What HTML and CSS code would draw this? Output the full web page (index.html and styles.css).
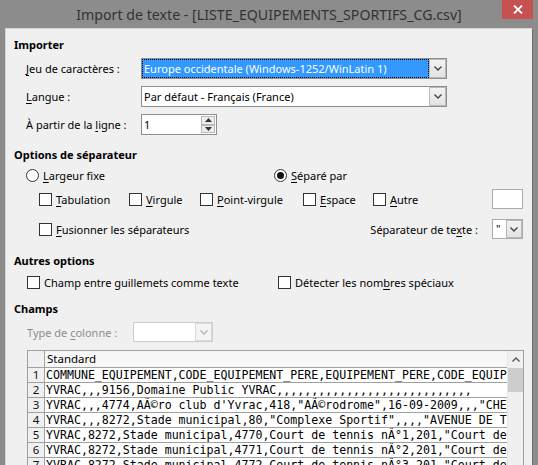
FILE: index.html
```html
<!DOCTYPE html>
<html lang="fr">
<head>
<meta charset="utf-8">
<title>Import de texte</title>
<link rel="stylesheet" href="styles.css">
</head>
<body>
<div class="window">
  <div class="titlebar">
    <span class="title">Import de texte - [LISTE_EQUIPEMENTS_SPORTIFS_CG.csv]</span>
    <div class="close"><svg width="10" height="9" viewBox="0 0 10 9"><path d="M1 0.5 L9 8.5 M9 0.5 L1 8.5" stroke="#fff" stroke-width="1.8" fill="none"/></svg></div>
  </div>
  <div class="panel">
    <div class="sec-title">Importer</div>
    <div class="frow r1">
      <span class="lbl"><u>J</u>eu de caractères :</span>
      <div class="combo wide">
        <div class="combo-text focused">Europe occidentale (Windows-1252/WinLatin 1)</div>
        <div class="combo-btn"><svg width="8" height="5" viewBox="0 0 8 5"><path d="M0.5 0.5 L4 4 L7.5 0.5" stroke="#444" stroke-width="1.4" fill="none"/></svg></div>
      </div>
    </div>
    <div class="frow r2">
      <span class="lbl"><u>L</u>angue :</span>
      <div class="combo wide">
        <div class="combo-text">Par défaut - Français (France)</div>
        <div class="combo-btn"><svg width="8" height="5" viewBox="0 0 8 5"><path d="M0.5 0.5 L4 4 L7.5 0.5" stroke="#444" stroke-width="1.4" fill="none"/></svg></div>
      </div>
    </div>
    <div class="frow r2">
      <span class="lbl">À partir de la <u>l</u>igne :</span>
      <div class="spin">
        <div class="spin-text">1</div>
        <div class="spin-btns">
          <div class="spin-b"><svg width="7" height="4" viewBox="0 0 7 4"><path d="M0 4 L3.5 0 L7 4 Z" fill="#333"/></svg></div>
          <div class="spin-b"><svg width="7" height="4" viewBox="0 0 7 4"><path d="M0 0 L3.5 4 L7 0 Z" fill="#333"/></svg></div>
        </div>
      </div>
    </div>

    <div class="sec-title s2">Options de séparateur</div>
    <div class="radrow">
      <div class="opt w248"><span class="radio"></span><span><u>L</u>argeur fixe</span></div>
      <div class="opt"><span class="radio on"></span><span><u>S</u>éparé par</span></div>
    </div>
    <div class="chkrow">
      <div class="opt w90"><span class="box"></span><span><u>T</u>abulation</span></div>
      <div class="opt w71"><span class="box"></span><span><u>V</u>irgule</span></div>
      <div class="opt w103"><span class="box"></span><span><u>P</u>oint-virgule</span></div>
      <div class="opt w70"><span class="box"></span><span><u>E</u>space</span></div>
      <div class="opt"><span class="box"></span><span><u>A</u>utre</span></div>
      <div class="field small"></div>
    </div>
    <div class="chkrow r-fus">
      <div class="opt"><span class="box"></span><span><u>F</u>usionner les séparateurs</span></div>
      <span class="txtsep">Séparateur de te<u>x</u>te :</span>
      <div class="combo tiny">
        <div class="combo-text">"</div>
        <div class="combo-btn sm"><svg width="8" height="5" viewBox="0 0 8 5"><path d="M0.5 0.5 L4 4 L7.5 0.5" stroke="#444" stroke-width="1.4" fill="none"/></svg></div>
      </div>
    </div>

    <div class="sec-title s3">Autres options</div>
    <div class="otherrow">
      <div class="opt w251"><span class="box"></span><span>Champ entre <u>g</u>uillemets comme texte</span></div>
      <div class="opt"><span class="box"></span><span>Détecter les nom<u>b</u>res spéciaux</span></div>
    </div>

    <div class="sec-title s4">Champs</div>
    <div class="typerow">
      <span class="lbl2">Type de <u>c</u>olonne :</span>
      <div class="combo dis">
        <div class="combo-text"></div>
        <div class="combo-btn"><svg width="8" height="5" viewBox="0 0 8 5"><path d="M0.5 0.5 L4 4 L7.5 0.5" stroke="#b5b5b5" stroke-width="1.4" fill="none"/></svg></div>
      </div>
    </div>

    <div class="table">
      <div class="grid">
        <div class="row head"><div class="num"></div><div class="cell hcell">Standard</div></div>
        <div class="row"><div class="num">1</div><div class="cell">COMMUNE_EQUIPEMENT,CODE_EQUIPEMENT_PERE,EQUIPEMENT_PERE,CODE_EQUIP</div></div>
        <div class="row"><div class="num">2</div><div class="cell">YVRAC,,,9156,Domaine Public YVRAC,,,,,,,,,,,,,,,,,,,,,,,,,,,,</div></div>
        <div class="row"><div class="num">3</div><div class="cell">YVRAC,,,4774,AÃ©ro club d'Yvrac,418,"AÃ©rodrome",16-09-2009,,,"CHE</div></div>
        <div class="row"><div class="num">4</div><div class="cell">YVRAC,,,8272,Stade municipal,80,"Complexe Sportif",,,,"AVENUE DE T</div></div>
        <div class="row"><div class="num">5</div><div class="cell">YVRAC,8272,Stade municipal,4770,Court de tennis nÂ°1,201,"Court de</div></div>
        <div class="row"><div class="num">6</div><div class="cell">YVRAC,8272,Stade municipal,4771,Court de tennis nÂ°2,201,"Court de</div></div>
        <div class="row"><div class="num">7</div><div class="cell">YVRAC,8272,Stade municipal,4772,Court de tennis nÂ°3,201,"Court de</div></div>
      </div>
      <div class="vscroll">
        <div class="sb-up"><svg width="8" height="5" viewBox="0 0 8 5"><path d="M0.5 4.5 L4 1 L7.5 4.5" stroke="#555" stroke-width="1.4" fill="none"/></svg></div>
        <div class="sb-thumb"></div>
      </div>
    </div>
  </div>
</div>
</body>
</html>
```

FILE: styles.css
```css
* { box-sizing: border-box; }
html, body { margin: 0; padding: 0; }
body {
  background: #8c8c8c;
  font-family: "Noto Sans", "Open Sans", sans-serif;
  font-size: 11px;
  color: #000;
  width: 538px;
  height: 465px;
  overflow: hidden;
}
u { text-decoration: underline; text-underline-offset: 2px; }

.window { width: 538px; height: 465px; }
.titlebar {
  height: 28px;
  position: relative;
  text-align: center;
}
.title {
  font-size: 14.2px;
  line-height: 29px;
  color: #333;
}
.close {
  position: absolute;
  top: 0;
  left: 502px;
  width: 31px;
  height: 19px;
  background: #c75050;
  display: flex;
  align-items: center;
  justify-content: center;
}

.panel {
  margin-left: 5px;
  width: 528px;
  height: 437px;
  background: #f0f0f0;
  border: 1px solid #d4d4d4;
  border-right-color: #6e6e6e;
  border-bottom: none;
  padding: 8px 9px 0 8px;
  overflow: hidden;
}

.sec-title {
  font-weight: bold;
  height: 16px;
  line-height: 16px;
}
.s2 { margin-top: 12px; }
.s3 { margin-top: 14px; }
.s4 { margin-top: 11px; }

.frow {
  display: flex;
  align-items: center;
  height: 21px;
  padding-left: 12px;
}
.r1 { margin-top: 5px; }
.r2 { margin-top: 7px; }
.lbl { width: 115px; flex: none; white-space: nowrap; }

.combo {
  display: flex;
  height: 21px;
  border: 1px solid #8e8e8e;
  background: #fff;
}
.combo.wide { width: 306px; }
.combo-text {
  flex: 1;
  padding-left: 2px;
  line-height: 19px;
  white-space: nowrap;
  overflow: hidden;
}
.combo-text.focused {
  background: #3399ff;
  color: #fff;
  outline: 1px dotted #000;
  outline-offset: -1px;
}
.combo-btn {
  width: 17px;
  flex: none;
  border: 1px solid #b9b9b9;
  background: linear-gradient(#f2f2f2, #e3e3e3);
  display: flex;
  align-items: center;
  justify-content: center;
}

.spin {
  display: flex;
  width: 76px;
  height: 21px;
  border: 1px solid #8e8e8e;
  background: #fff;
}
.spin-text { flex: 1; padding-left: 2px; line-height: 19px; }
.spin-btns {
  width: 16px;
  display: flex;
  flex-direction: column;
  padding: 1px;
}
.spin-b {
  flex: 1;
  border: 1px solid #b9b9b9;
  background: #ececec;
  display: flex;
  align-items: center;
  justify-content: center;
}

.opt {
  display: flex;
  align-items: center;
  white-space: nowrap;
  flex: none;
}
.box, .radio {
  width: 13px;
  height: 13px;
  border: 1px solid #333;
  background: #fff;
  margin-right: 4px;
  flex: none;
}
.radio { border-radius: 50%; display: flex; align-items: center; justify-content: center; }
.radio.on::after {
  content: "";
  width: 7px;
  height: 7px;
  border-radius: 50%;
  background: #111;
}
.w248 { width: 248px; }
.w90 { width: 90px; }
.w71 { width: 71px; }
.w103 { width: 103px; }
.w70 { width: 70px; }
.w251 { width: 251px; }

.radrow {
  display: flex;
  align-items: center;
  height: 16px;
  margin-top: 4px;
  padding-left: 12px;
}
.chkrow {
  display: flex;
  align-items: center;
  height: 20px;
  margin-top: 6px;
  padding-left: 25px;
}
.r-fus { margin-top: 10px; }
.field.small {
  margin-left: auto;
  width: 31px;
  height: 20px;
  background: #fff;
  border: 1px solid #ababab;
}
.txtsep { margin-left: auto; margin-right: 14px; white-space: nowrap; }
.combo.tiny { width: 31px; height: 20px; border-color: #ababab; }
.combo.tiny .combo-text { line-height: 18px; padding-left: 3px; }
.combo-btn.sm { width: 16px; }

.otherrow {
  display: flex;
  align-items: center;
  height: 16px;
  margin-top: 5px;
  padding-left: 13px;
}

.typerow {
  display: flex;
  align-items: center;
  height: 20px;
  margin-top: 5px;
  padding-left: 13px;
}
.lbl2 { width: 106px; color: #8d8d8d; white-space: nowrap; }
.combo.dis { width: 80px; height: 20px; border-color: #cccccc; }
.combo.dis .combo-btn { border-color: #dadada; background: #f4f4f4; }

.table {
  margin-top: 8px;
  margin-left: 13px;
  width: 497px;
  height: 140px;
  border: 1px solid #a0a0a0;
  border-bottom: none;
  display: flex;
  background: #fff;
}
.grid { flex: 1; overflow: hidden; }
.row {
  display: flex;
  height: 15px;
  border-bottom: 1px solid #a0a0a0;
}
.row.head { height: 17px; }
.num {
  width: 17px;
  flex: none;
  background: #f0f0f0;
  border-right: 1px solid #a0a0a0;
  text-align: center;
  font-size: 11.5px;
  line-height: 14px;
  color: #111;
}
.cell {
  flex: 1;
  padding-left: 1px;
  font-family: "DejaVu Sans Mono", "Liberation Mono", monospace;
  font-size: 11.6px;
  line-height: 14px;
  white-space: pre;
  overflow: hidden;
}
.hcell {
  font-family: "Noto Sans", "Open Sans", sans-serif;
  font-size: 11.5px;
  line-height: 16px;
  padding-left: 2px;
  background: #f7f7f7;
}
.vscroll {
  width: 16px;
  flex: none;
  background: #f0f0f0;
  border-left: 1px solid #e6e6e6;
}
.sb-up {
  height: 17px;
  display: flex;
  align-items: center;
  justify-content: center;
}
.sb-thumb {
  height: 24px;
  background: #cdcdcd;
}
```
